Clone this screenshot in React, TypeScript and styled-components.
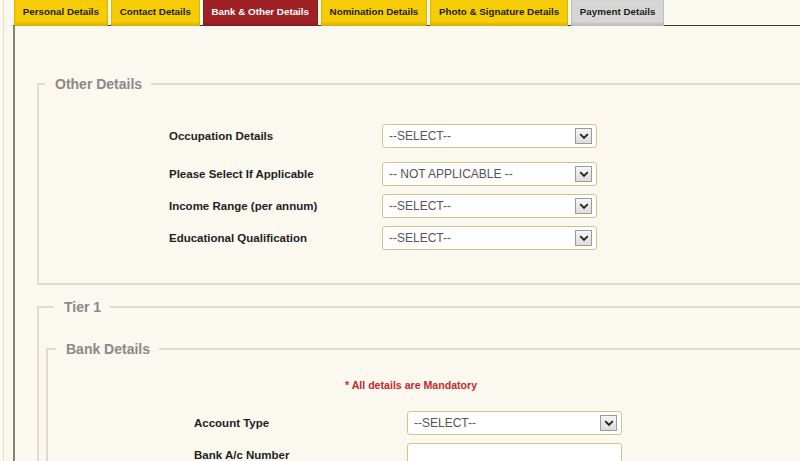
import React from "react"
import styled, { createGlobalStyle } from "styled-components"

const GlobalStyle = createGlobalStyle`
  html, body {
    margin: 0;
    padding: 0;
    background: #fbf8ef;
    overflow: hidden;
  }
  body {
    font-family: "Liberation Sans", Arial, sans-serif;
  }
`

const Page = styled.div`
  display: flex;
  align-items: stretch;
  min-height: 461px;
`

const Gutter = styled.div`
  margin-left: 3px;
  width: 9px;
  border-left: 1px solid #ebdfb4;
  flex-shrink: 0;
`

const Main = styled.div`
  display: flex;
  flex-direction: column;
  width: 960px;
  flex-shrink: 0;
`

const TabBar = styled.div`
  display: flex;
  gap: 3px;
  height: 25px;
  padding-left: 1px;
  border-bottom: 1px solid #4d3224;
`

const Tab = styled.div<{ $kind?: "active" | "disabled" }>`
  display: flex;
  align-items: center;
  height: 26px;
  padding: 0 8.8px 3px;
  box-sizing: border-box;
  margin-bottom: -1px;
  font-size: 9.8px;
  font-weight: bold;
  white-space: nowrap;
  color: ${(p) => (p.$kind === "active" ? "#ffffff" : "#231e14")};
  background: ${(p) =>
    p.$kind === "active" ? "#9d2125" : p.$kind === "disabled" ? "#d6d6d6" : "#f5cc06"};
  box-shadow: inset 0 -3px 2px rgba(0, 0, 0, 0.1), inset 1px 0 1px rgba(0, 0, 0, 0.08),
    inset -1px 0 1px rgba(0, 0, 0, 0.08);
`

const Panel = styled.div`
  flex: 1;
  border-left: 2px solid #8b8076;
  padding: 50px 0 0 22px;
`

const Fieldset = styled.fieldset<{ $inset?: number; $top?: number }>`
  margin: ${(p) => p.$top ?? 0}px 0 0;
  border: 2px solid #e0dcd3;
  padding: 0 0 0 ${(p) => p.$inset ?? 0}px;
  min-width: 0;

  & + & {
    margin-top: 14px;
  }
`

const Legend = styled.legend<{ $shift?: number }>`
  margin-left: ${(p) => p.$shift ?? 6}px;
  padding: 0 9px 0 10px;
  font-size: 14px;
  line-height: 16px;
  font-weight: bold;
  color: #8a8a8a;
`

const FormGrid = styled.div<{ $left: number; $top?: number; $bottom?: number }>`
  display: flex;
  flex-direction: column;
  padding: ${(p) => p.$top ?? 0}px 0 ${(p) => p.$bottom ?? 0}px ${(p) => p.$left}px;
`

const Row = styled.div<{ $extra?: number }>`
  display: grid;
  grid-template-columns: 213px 215px;
  align-items: center;
  height: 32px;
  margin-bottom: ${(p) => p.$extra ?? 0}px;
`

const Label = styled.label`
  font-size: 11.5px;
  font-weight: bold;
  color: #1e1e1e;
`

const SelectBox = styled.div`
  display: flex;
  align-items: center;
  justify-content: space-between;
  height: 24px;
  box-sizing: border-box;
  border: 1px solid #d5c286;
  border-radius: 3px;
  background: #ffffff;
  padding: 0 4px 0 6px;
  font-size: 12px;
  color: #555555;
`

const ArrowBox = styled.span`
  display: flex;
  align-items: center;
  justify-content: center;
  width: 17px;
  height: 16px;
  box-sizing: border-box;
  border: 1px solid #9a9a9a;
  background: linear-gradient(#f6f6f6, #dcdcdc);
`

const TextBox = styled.div`
  height: 24px;
  box-sizing: border-box;
  border: 1px solid #d5c286;
  border-radius: 3px;
  background: #ffffff;
`

const Notice = styled.div`
  margin: 21px 0 15px 297px;
  font-size: 10.6px;
  line-height: 14px;
  font-weight: bold;
  color: #c5282c;
`

const Select = ({ value }: { value: string }) => (
  <SelectBox>
    <span>{value}</span>
    <ArrowBox>
      <svg width="10" height="7" viewBox="0 0 10 7">
        <path d="M1.2 1.2 L5 5 L8.8 1.2" fill="none" stroke="#222" strokeWidth="1.8" />
      </svg>
    </ArrowBox>
  </SelectBox>
)

const tabs: { name: string; kind?: "active" | "disabled" }[] = [
  { name: "Personal Details" },
  { name: "Contact Details" },
  { name: "Bank & Other Details", kind: "active" },
  { name: "Nomination Details" },
  { name: "Photo & Signature Details" },
  { name: "Payment Details", kind: "disabled" },
]

export default function App() {
  return (
    <Page>
      <GlobalStyle />
      <Gutter />
      <Main>
        <TabBar>
          {tabs.map((t) => (
            <Tab key={t.name} $kind={t.kind}>
              {t.name}
            </Tab>
          ))}
        </TabBar>
        <Panel>
          <Fieldset>
            <Legend>Other Details</Legend>
            <FormGrid $left={130} $top={28} $bottom={29}>
              <Row $extra={6}>
                <Label>Occupation Details</Label>
                <Select value="--SELECT--" />
              </Row>
              <Row>
                <Label>Please Select If Applicable</Label>
                <Select value="-- NOT APPLICABLE --" />
              </Row>
              <Row>
                <Label>Income Range (per annum)</Label>
                <Select value="--SELECT--" />
              </Row>
              <Row>
                <Label>Educational Qualification</Label>
                <Select value="--SELECT--" />
              </Row>
            </FormGrid>
          </Fieldset>
          <Fieldset $inset={7}>
            <Legend $shift={8}>Tier 1</Legend>
            <Fieldset $top={26}>
              <Legend $shift={8}>Bank Details</Legend>
              <Notice>* All details are Mandatory</Notice>
              <FormGrid $left={146}>
                <Row>
                  <Label>Account Type</Label>
                  <Select value="--SELECT--" />
                </Row>
                <Row>
                  <Label>Bank A/c Number</Label>
                  <TextBox />
                </Row>
              </FormGrid>
            </Fieldset>
          </Fieldset>
        </Panel>
      </Main>
    </Page>
  )
}
